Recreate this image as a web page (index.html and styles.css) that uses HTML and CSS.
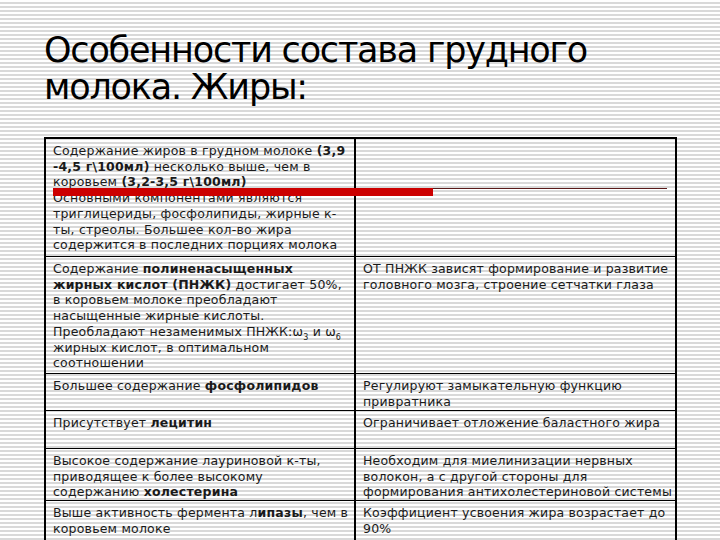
FILE: index.html
```html
<!DOCTYPE html>
<html lang="ru">
<head>
<meta charset="utf-8">
<link rel="stylesheet" href="styles.css">
</head>
<body>
<div class="slide">
  <h1 class="title">Особенности состава грудного<br>молока. Жиры:</h1>
  <table class="grid">
    <colgroup><col class="c1"><col class="c2"></colgroup>
    <tr class="r1">
      <td>Содержание жиров в грудном молоке <b>(3,9<br>-4,5 г\100мл)</b> несколько выше, чем в<br>коровьем <b>(3,2-3,5 г\100мл)</b><br>Основными компонентами являются<br>триглицериды, фосфолипиды, жирные к-<br>ты, стреолы. Большее кол-во жира<br>содержится в последних порциях молока</td>
      <td></td>
    </tr>
    <tr class="r2">
      <td>Содержание <b>полиненасыщенных<br>жирных кислот (ПНЖК)</b> достигает 50%,<br>в коровьем молоке преобладают<br>насыщенные жирные кислоты.<br>Преобладают незаменимых ПНЖК:ω<sub>3</sub> и ω<sub>6</sub><br>жирных кислот, в оптимальном<br>соотношении</td>
      <td>ОТ ПНЖК зависят формирование и развитие<br>головного мозга, строение сетчатки глаза</td>
    </tr>
    <tr class="r3">
      <td>Большее содержание <b>фосфолипидов</b></td>
      <td>Регулируют замыкательную функцию<br>привратника</td>
    </tr>
    <tr class="r4">
      <td>Присутствует <b>лецитин</b></td>
      <td>Ограничивает отложение баластного жира</td>
    </tr>
    <tr class="r5">
      <td>Высокое содержание лауриновой к-ты,<br>приводящее к более высокому<br>содержанию <b>холестерина</b></td>
      <td>Необходим для миелинизации нервных<br>волокон, а с другой стороны для<br>формирования антихолестериновой системы</td>
    </tr>
    <tr class="r6">
      <td>Выше активность фермента л<b>ипазы</b>, чем в<br>коровьем молоке</td>
      <td>Коэффициент усвоения жира возрастает до<br>90%</td>
    </tr>
  </table>
  <div class="redbar"></div>
  <div class="thinline"></div>
</div>
</body>
</html>
```
FILE: styles.css
```css
html, body {
  margin: 0;
  padding: 0;
}
body {
  width: 720px;
  height: 540px;
  overflow: hidden;
  background: repeating-linear-gradient(to bottom, #ffffff 0 2px, #d9d9d9 2px 4px);
}
.slide {
  position: relative;
  width: 720px;
  height: 540px;
  overflow: hidden;
}
.title {
  margin: 0;
  padding: 32px 0 0 44px;
  font-family: "DejaVu Sans", sans-serif;
  font-weight: normal;
  font-size: 35px;
  letter-spacing: -1.2px;
  line-height: 37px;
  color: #000;
  height: 75px;
}
.grid {
  margin: 30px 0 0 44px;
  border-collapse: collapse;
  table-layout: fixed;
  width: 631px;
  border: 2px solid #000;
  font-family: "DejaVu Sans", sans-serif;
  font-size: 12.5px;
  letter-spacing: 0.2px;
  line-height: 15.7px;
  color: #1a1a1a;
}
.c1 { width: 310px; }
.c2 { width: 321px; }
.grid td {
  border: 1px solid #000;
  padding: 4px 2px 0 7px;
  vertical-align: top;
  white-space: nowrap;
  overflow: hidden;
}
.grid td + td {
  border-left: 2px solid #000;
  padding-left: 7px;
}
.grid b { font-weight: bold; }
.grid sub { font-size: 8px; line-height: 0; }
.r1 td { height: 113px; }
.r2 td { height: 112px; }
.r3 td { height: 32px; }
.r4 td { height: 33px; }
.r5 td { height: 47px; }
.r6 td { height: 38px; }
.redbar {
  position: absolute;
  left: 53px;
  top: 188px;
  width: 380px;
  height: 8px;
  background: #cc0000;
}
.thinline {
  position: absolute;
  left: 433px;
  top: 188px;
  width: 234px;
  height: 1px;
  background: #5a1a1a;
}
```
